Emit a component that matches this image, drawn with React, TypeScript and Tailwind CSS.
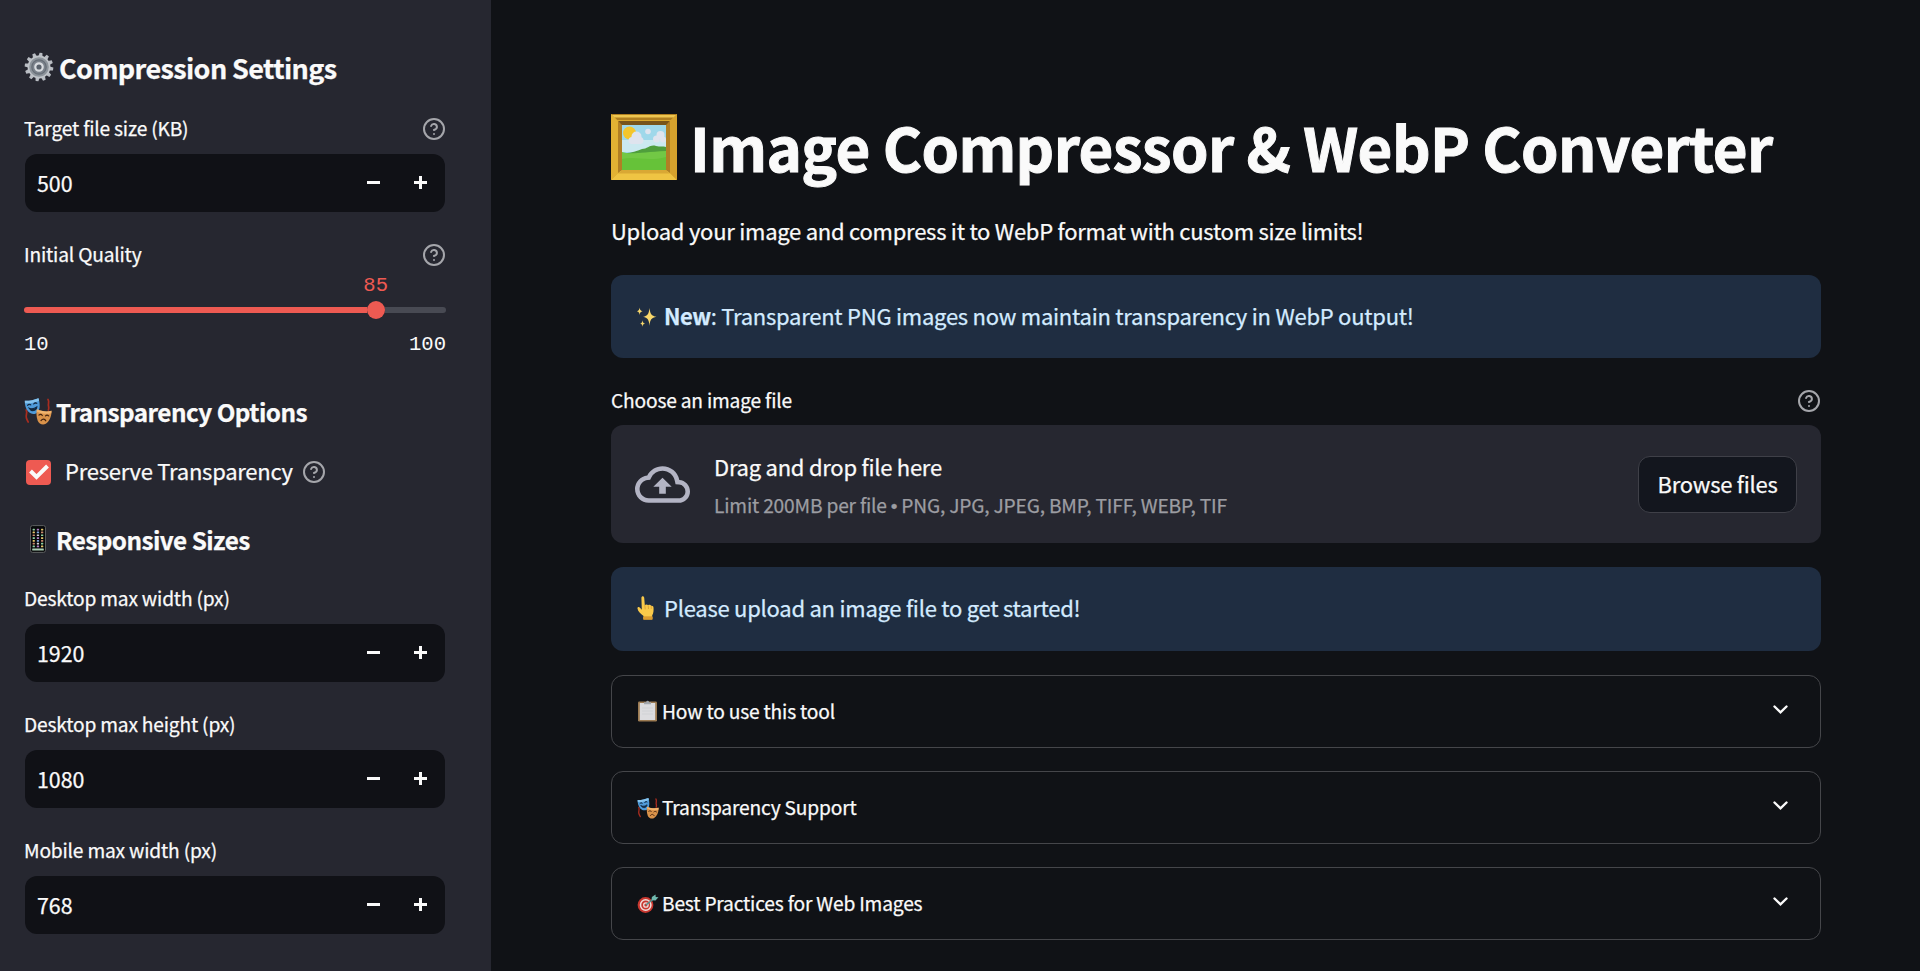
import React from "react";

const Help = ({ className = "" }: { className?: string }) => (
  <svg viewBox="0 0 24 24" className={`size-6 shrink-0 text-[#a5a6ab] ${className}`} fill="none" stroke="currentColor" strokeWidth="2" strokeLinecap="round" strokeLinejoin="round">
    <circle cx="12" cy="12" r="10" />
    <path d="M9.09 9a3 3 0 0 1 5.83 1c0 2-3 3-3 3" />
    <path d="M12 17h.01" />
  </svg>
);

const teeth = Array.from({ length: 12 }, (_, i) => i * 30 + 8);

const Gear = () => (
  <svg viewBox="0 0 30 30" className="size-[30px] shrink-0">
    <g fill="#b9bdc3">
      {teeth.map((a) => (
        <path key={a} d="M12.900 4.500l.7-3.800h2.800l.7 3.800z" transform={`rotate(${a} 15 15)`} />
      ))}
    </g>
    <circle cx="15" cy="15" r="10.600" fill="#8d949b" stroke="#c0c4c9" strokeWidth="1.600" />
    <circle cx="15" cy="15" r="7.200" fill="#7b828b" stroke="#666d76" strokeWidth="1.200" />
    <circle cx="15" cy="15" r="3.700" fill="#59616b" stroke="#d9dce0" strokeWidth="2.200" />
  </svg>
);

const Masks = ({ className = "" }: { className?: string }) => (
  <svg viewBox="0 0 28 28" className={`shrink-0 ${className}`} fill="none" strokeLinecap="round">
    <path d="M2.200 13c1.600 3-.8 5 .2 8 .4 1.600 1 2.500 1.800 4M24 2.500c1.800 2.500-.4 4 .6 7 .4 1.500.2 2.500-.2 3.500" stroke="#a92c1f" strokeWidth="1.700" />
    <path d="M.8 3.800C5 4 10 3 14.500 1.200c1.600 5.300 1.900 10.500-.7 14-2.400 2.600-7 2.300-9.600-.6C1.600 11.500.7 8 .8 3.800z" fill="#4f9bd9" />
    <path d="M.8 3.800C5 4 10 3 14.500 1.200l.6 2.600C10 6.200 5.500 6.500 1 6.300z" fill="#86c4ee" />
    <path d="M3.600 8.300c.9-1.200 2.300-1.300 3.200-.4M9.700 7c.8-1.300 2.200-1.500 3.100-.7M5.200 11.200c2.700 1.200 5.300.6 7.600-1.300-.3 3.900-5.300 5.300-7.600 1.300z" stroke="#13293f" strokeWidth="1.100" fill="#13293f" />
    <path d="M13 12.300c4.200 2 9.600 2.700 14.500 1.500.1 5.200-1.900 10.300-5.700 13-3.200 1.600-6.800.2-8.100-3-1.300-3.600-1.700-7.500-.7-11.500z" fill="#d9924a" />
    <path d="M13 12.300c4.200 2 9.600 2.700 14.500 1.500l-.2 2.400c-5.200 1.100-9.900.4-14.600-1.500z" fill="#f0b36d" />
    <path d="M15 18.100c1.200-.9 2.400-.8 3.300.4M21.500 18.900c1-.9 2.200-.8 3.200 0M17 23.600c1.600-2.200 3.800-2 4.800.2" stroke="#46240f" strokeWidth="1.200" />
  </svg>
);

const dots = Array.from({ length: 21 }, (_, i) => i);
const dotColors = ["#8fd0a0", "#d7d7d7", "#c98a6d", "#7ea6dd", "#e2c66a", "#b07fc4"];

const Phone = () => (
  <svg viewBox="0 0 28 28" className="size-7 shrink-0">
    <rect x="6.500" y=".6" width="15" height="26.800" rx="2" fill="#08090b" stroke="#5c5e60" strokeWidth="1" />
    {dots.map((i) => (
      <rect key={i} x={8.600 + (i % 3) * 4.200} y={3.800 + Math.floor(i / 3) * 2.800} width="2.300" height="1.700" rx=".4" fill={dotColors[(i * 5 + Math.floor(i / 3)) % 6]} />
    ))}
    <rect x="8.200" y="23.600" width="11.600" height="2" rx=".5" fill="#a9cdb4" />
  </svg>
);

const Picture = () => (
  <svg viewBox="0 0 66 66" className="mt-0.5 size-[66px] shrink-0">
    <rect width="66" height="66" rx="1" fill="#d9a72c" />
    <path d="M0 0h66l-6 6H6z" fill="#b07f20" />
    <path d="M0 66h66l-9-9H9z" fill="#efc443" />
    <path d="M0 0l10 10v46L0 66z" fill="#e2b233" />
    <path d="M66 0L56 10v46l10 10z" fill="#d6a22d" />
    <path d="M1 1h64l-2.500 2.500h-59z" fill="#eec650" />
    <path d="M7 7h52l-3 4H10z" fill="#77541a" />
    <path d="M7 7l4 4v45l-4 3zM59 7l-4 4v45l4 3z" fill="#b17f24" />
    <path d="M7 59.500l4-3.500h44l4 3.500z" fill="#d9a834" />
    <rect x="11" y="11" width="44" height="45" fill="#9fd8ea" />
    <path d="M11 26h44v12H11z" fill="#cbe9f0" />
    <circle cx="18.500" cy="19" r="6.500" fill="#f4c62c" />
    <g fill="#dfe4ee">
      <circle cx="21" cy="26.500" r="3.500" />
      <circle cx="25.500" cy="22.500" r="5" />
      <circle cx="29" cy="26.500" r="3.500" />
      <path d="M20 26h10v4H20z" />
      <circle cx="37" cy="17.500" r="2.800" />
      <circle cx="45.500" cy="25" r="3.500" />
      <circle cx="49.500" cy="21" r="4" />
      <circle cx="52" cy="25.500" r="3" />
    </g>
    <path d="M11 39c8 1 14-2 20-4 6 0 8-5 14-3 4 1 7 0 10 1v22H11z" fill="#4f9e3c" />
    <path d="M11 38c9 3 20 0 44-1v19H11z" fill="#72c845" />
    <path d="M11 45c14-3 26 3 44-2v13H11z" fill="#66c239" />
  </svg>
);

const Sparkles = () => (
  <svg viewBox="0 0 22 22" className="size-[22px] shrink-0" fill="#f7d66b">
    <path d="M13.500 2c.7 6 1.800 7.800 7 8.800-5.200 1-6.300 2.800-7 9-.7-6.200-1.800-8-6.300-9 4.500-1 5.600-2.800 6.300-8.800z" />
    <path d="M3.600 1.500c.3 2.400.8 3.200 3 3.700-2.200.5-2.700 1.300-3 3.700-.3-2.400-.8-3.200-2.700-3.700 1.900-.5 2.400-1.300 2.700-3.700zM6.500 14.200c.3 2.200.7 2.800 2.600 3.300-1.900.5-2.300 1.100-2.600 3.300-.3-2.200-.7-2.800-2.400-3.300 1.700-.5 2.100-1.100 2.400-3.300z" />
  </svg>
);

const Finger = () => (
  <svg viewBox="0 0 22 26" className="mb-[3px] h-[26px] w-[22px] shrink-0">
    <path d="M5.400 2.800c0-2.200 2.700-2.200 2.800 0l.6 7.200c1.200-1 2.700-.7 3.300.3 1.300-.8 2.500-.4 3 .5 1.300-.4 2.400.4 2.400 1.800.2 3 .2 5-1.300 8v3.500H7.600v-3.200C4.500 19 2 16.500 1.500 13.500c-.3-1.700 1.600-2 2.500-.7l1.800 2z" fill="#f9c94a" />
    <path d="M7.600 21.800h8.600v2.600H7.600zM8.800 10l.4 4.300M12.200 10.500l.3 3.500M15.200 11l.1 2.800" fill="#dd9c31" stroke="#d89a30" strokeWidth=".8" />
  </svg>
);

const Clipboard = () => (
  <svg viewBox="0 0 21 23" className="mb-0.5 h-[23px] w-[21px] shrink-0">
    <rect x="1" y="2.500" width="19" height="20" rx="1.200" fill="#9c7b52" />
    <path d="M2.800 4h15.400v17H2.800z" fill="#dcdcdf" />
    <path d="M7 3.200h2.200a1.400 1.400 0 0 1 2.800 0H14v2H7z" fill="#a3a8ae" />
    <path d="M5 9h11M5 12h11M5 15h11" stroke="#cbccd0" strokeWidth=".6" />
  </svg>
);

const Target = () => (
  <svg viewBox="0 0 22 20" className="h-5 w-[22px] shrink-0" fill="none">
    <circle cx="8.500" cy="11" r="7.900" fill="#c9372f" />
    <circle cx="8.700" cy="11" r="5.200" stroke="#f1dedb" strokeWidth="1.500" />
    <circle cx="8.900" cy="11" r="2.200" stroke="#f1dedb" strokeWidth="1.300" />
    <path d="M9 11l8-6.500" stroke="#4d8f8c" strokeWidth="1.500" />
    <path d="M14.500 6.300l.4-3.200L18.500.5l.2 2.500 2.800.3-3 3.200z" fill="#6fb8ae" />
  </svg>
);

const LABEL = "text-[19.200px] tracking-[-0.190px] whitespace-nowrap";
const BODY = "text-[22px] tracking-[-0.250px] whitespace-nowrap";
const H3 = "mt-px text-[24.300px] tracking-[-0.550px] leading-9 font-bold whitespace-nowrap";

const Field = ({ label, value, help }: { label: string; value: string; help?: boolean }) => (
  <div>
    <div className="flex h-[34px] items-center justify-between">
      <span className={`${LABEL} leading-[34px]`}>{label}</span>
      {help && <Help className="mt-0.5" />}
    </div>
    <div className="mt-[9px] mr-px ml-px flex h-[58px] items-center rounded-xl bg-[#101116] pr-[18px] pl-[12px]">
      <span className="mb-px flex-1 text-[21.400px] leading-[56px]">{value}</span>
      <svg viewBox="0 0 13 13" className="mb-px size-[13px]" stroke="#fafafa" strokeWidth="3"><path d="M0 6.500h13" /></svg>
      <svg viewBox="0 0 13 13" className="mb-px ml-[34px] size-[13px]" stroke="#fafafa" strokeWidth="3"><path d="M0 6.500h13M6.500 0v13" /></svg>
    </div>
  </div>
);

const Expander = ({ icon, title }: { icon: React.ReactNode; title: string }) => (
  <div className="mt-[23px] flex h-[73px] items-center rounded-xl border border-[#45464a] pr-[32px] pl-[25px]">
    <span className="flex w-[25px] items-center">{icon}</span>
    <span className={`${LABEL} mb-px flex-1 leading-[70px]`}>{title}</span>
    <svg viewBox="0 0 15 9" className="mb-[4px] h-[9px] w-[15px]" fill="none" stroke="#fafafa" strokeWidth="2.400" strokeLinecap="round"><path d="M1.500 1.500l6 5.800 6-5.800" /></svg>
  </div>
);

export default function App() {
  return (
    <div className="flex h-[971px] w-[1920px] overflow-hidden bg-[#101216] font-['Noto_Sans_CJK_SC',sans-serif] text-[#fafafa] [-webkit-text-stroke:0.250px]">
      <aside className="w-[491px] shrink-0 bg-[#262730] pt-[47px] pr-[45px] pl-6">
        <h2 className="flex h-10 items-center">
          <Gear />
          <span className="mt-px ml-[5px] text-[27px] leading-10 font-bold tracking-[-0.610px] whitespace-nowrap">Compression Settings</span>
        </h2>
        <div className="mt-6">
          <Field label="Target file size (KB)" value="500" help />
        </div>
        <div className="mt-[25px]">
          <div className="flex h-[34px] items-center justify-between">
            <span className={`${LABEL} leading-[34px]`}>Initial Quality</span>
            <Help className="mt-0.5" />
          </div>
          <div className="mt-[3px] flex h-[23px] justify-end pr-[58px] font-['Liberation_Mono',monospace] text-[20.600px] leading-[23px] text-[#ee5a52] [-webkit-text-stroke:0px]">85</div>
          <div className="mt-1 flex h-[18px] items-center">
            <div className="h-1.5 w-[343px] rounded-l-full bg-[#ee5a52]" />
            <div className="size-[18px] rounded-full bg-[#ee5a52]" />
            <div className="h-1.5 flex-1 rounded-r-full bg-[#484a53]" />
          </div>
          <div className="mt-[14px] flex h-6 justify-between font-['Liberation_Mono',monospace] text-[20.600px] leading-6 [-webkit-text-stroke:0px]">
            <span>10</span>
            <span>100</span>
          </div>
        </div>
        <h3 className="mt-9 flex h-9 items-center">
          <Masks className="size-7" />
          <span className={`ml-1 ${H3}`}>Transparency Options</span>
        </h3>
        <div className="mt-[26px] flex h-[34px] items-center pl-0.5">
          <span className="flex size-[25px] items-center justify-center rounded bg-[#ee5a52]">
            <svg viewBox="0 0 20 16" className="h-4 w-5" fill="none" stroke="#fafafa" strokeWidth="4"><path d="M1.500 7l6 6L18.500 2" /></svg>
          </span>
          <span className={`-mt-[4px] ml-[14px] leading-[34px] ${BODY}`}>Preserve Transparency</span>
          <Help className="ml-[9px]" />
        </div>
        <h3 className="mt-8 flex h-9 items-center">
          <Phone />
          <span className={`ml-1 ${H3}`}>Responsive Sizes</span>
        </h3>
        <div className="mt-6 flex flex-col gap-[25px]">
          <Field label="Desktop max width (px)" value="1920" />
          <Field label="Desktop max height (px)" value="1080" />
          <Field label="Mobile max width (px)" value="768" />
        </div>
      </aside>

      <main className="flex-1 pt-[106px] pr-[99px] pl-[120px]">
        <h1 className="flex h-20 items-center">
          <Picture />
          <span className="ml-[13px] text-[60px] leading-[80px] font-bold tracking-[-0.600px] whitespace-nowrap [-webkit-text-stroke:1px]">Image Compressor &amp; WebP Converter</span>
        </h1>
        <p className={`mt-[26px] h-9 leading-9 ${BODY}`}>Upload your image and compress it to WebP format with custom size limits!</p>

        <div className={`mt-[27px] flex h-[83px] items-center rounded-xl bg-[#1f2d41] pl-[25px] text-[#d3ebff] ${BODY}`}>
          <Sparkles />
          <p className="mb-[3px] ml-[6px]"><strong className="tracking-[-0.500px]">New</strong>: Transparent PNG images now maintain transparency in WebP output!</p>
        </div>

        <div className="mt-6 flex h-[34px] items-center justify-between">
          <span className={`${LABEL} mt-0.5 leading-[34px]`}>Choose an image file</span>
          <Help className="mt-1" />
        </div>
        <div className="mt-[9px] flex h-[118px] items-center rounded-xl bg-[#262730] pr-6 pl-6">
          <svg viewBox="0 4 24 16" className="h-[37px] w-[55px] shrink-0" fill="#b3b4c4">
            <path d="M19.350 10.040A7.490 7.490 0 0 0 12 4C9.110 4 6.600 5.640 5.350 8.040A5.994 5.994 0 0 0 0 14c0 3.310 2.690 6 6 6h13c2.760 0 5-2.240 5-5 0-2.640-2.050-4.780-4.650-4.960zM19 18H6c-2.210 0-4-1.790-4-4 0-2.050 1.530-3.760 3.560-3.970l1.070-.11.5-.95A5.469 5.469 0 0 1 12 6c2.620 0 4.880 1.860 5.390 4.430l.3 1.500 1.530.11A2.980 2.980 0 0 1 22 15c0 1.650-1.350 3-3 3zM8 13h2.550v3h2.900v-3H16l-4-4z" />
          </svg>
          <div className="mt-1 ml-6 flex-1">
            <div className={`leading-9 ${BODY}`}>Drag and drop file here</div>
            <div className={`mt-[3px] leading-9 text-[#9c9da2] ${LABEL}`}>
              Limit 200MB per file<span className="mx-1 font-['Liberation_Sans',sans-serif]">•</span>PNG, JPG, JPEG, BMP, TIFF, WEBP, TIF
            </div>
          </div>
          <button className={`h-[57px] w-[159px] rounded-xl border border-[#3f4048] bg-[#13161e] pb-[2px] ${BODY}`}>Browse files</button>
        </div>

        <div className={`mt-6 flex h-[84px] items-center rounded-xl bg-[#1f2d41] pl-[25px] text-[#d3ebff] ${BODY}`}>
          <Finger />
          <p className="mb-[3px] ml-[6px]">Please upload an image file to get started!</p>
        </div>

        <div className="pt-px">
          <Expander icon={<Clipboard />} title="How to use this tool" />
          <Expander icon={<Masks className="size-[22px]" />} title="Transparency Support" />
          <Expander icon={<Target />} title="Best Practices for Web Images" />
        </div>
      </main>
    </div>
  );
}
